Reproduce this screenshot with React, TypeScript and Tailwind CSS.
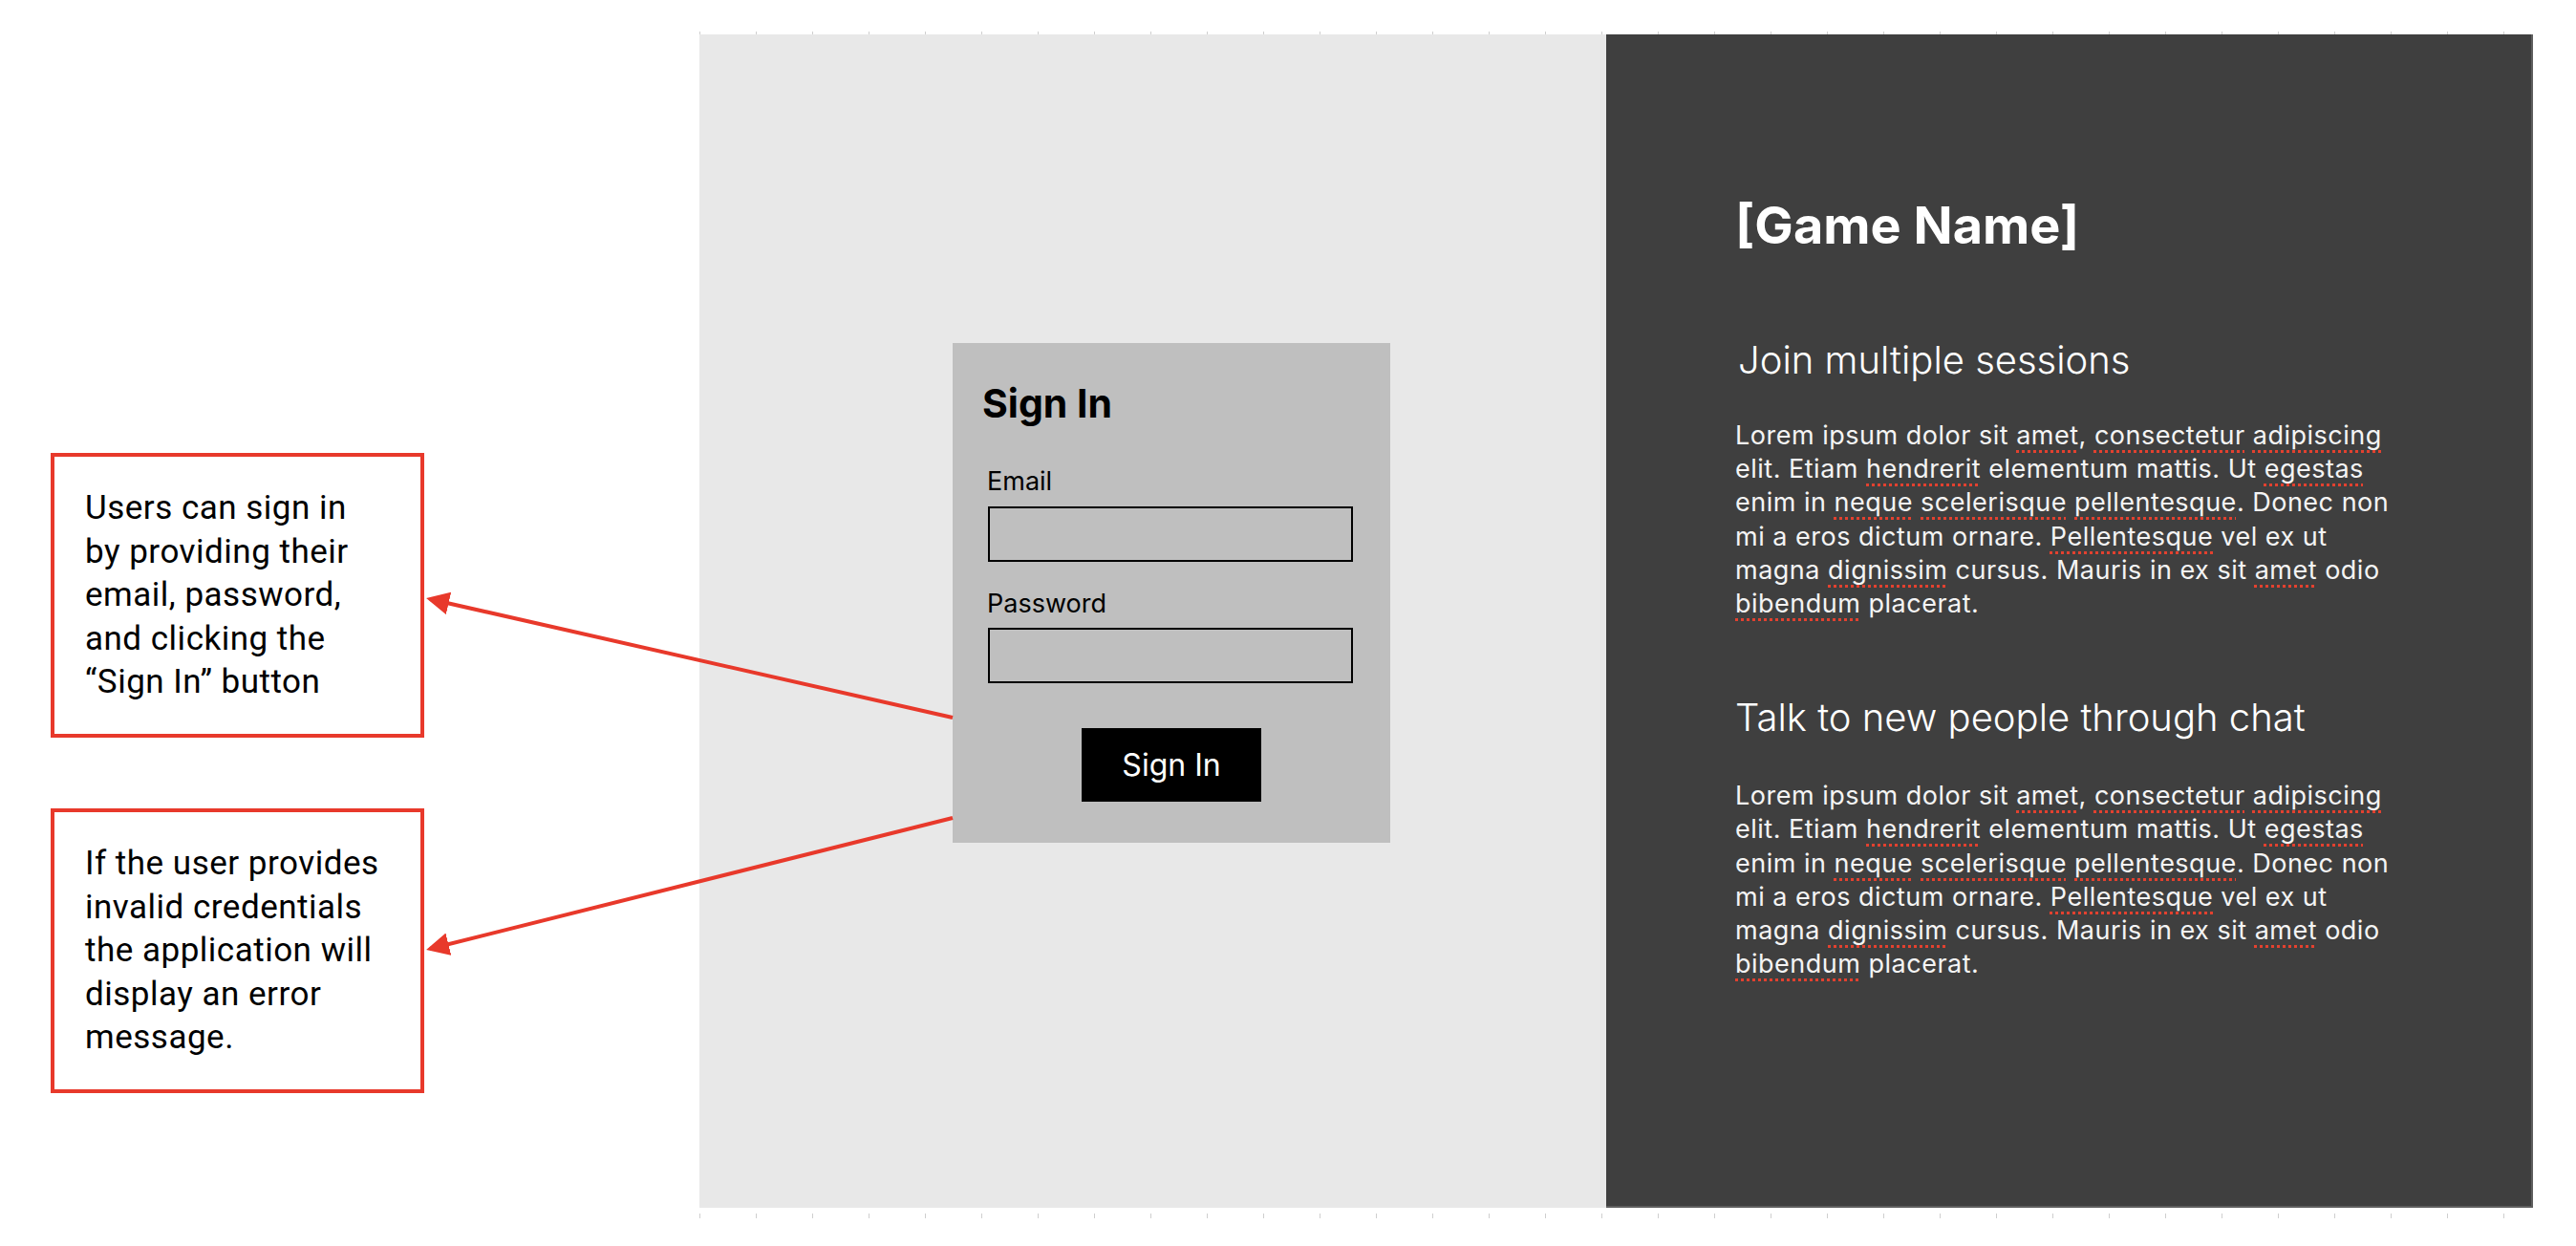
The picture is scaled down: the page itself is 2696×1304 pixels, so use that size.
import React from 'react'

const sq = 'underline decoration-dotted decoration-[#e3412f] decoration-[3px] underline-offset-[6px]'

function Lorem() {
  return (
    <p className="text-[27px] leading-[35.2px] tracking-[0.5px] text-[#f4f4f4] whitespace-nowrap">
      Lorem ipsum dolor sit <span className={sq}>amet</span>, <span className={sq}>consectetur</span> <span className={sq}>adipiscing</span>
      <br />
      elit. Etiam <span className={sq}>hendrerit</span> elementum mattis. Ut <span className={sq}>egestas</span>
      <br />
      enim in <span className={sq}>neque</span> <span className={sq}>scelerisque</span> <span className={sq}>pellentesque</span>. Donec non
      <br />
      mi a eros dictum ornare. <span className={sq}>Pellentesque</span> vel ex ut
      <br />
      magna <span className={sq}>dignissim</span> cursus. Mauris in ex sit <span className={sq}>amet</span> odio
      <br />
      <span className={sq}>bibendum</span> placerat.
    </p>
  )
}

function Note({ lines }: { lines: string[] }) {
  return (
    <div className="h-[298px] border-[4px] border-[#e8392b] bg-white pl-[32px] pt-[31px] font-['Roboto',sans-serif] text-[35px] leading-[45.6px] tracking-[0.5px] text-black">
      {lines.map((l, i) => (
        <div key={i} className="whitespace-nowrap">{l}</div>
      ))}
    </div>
  )
}

function Ticks({ className }: { className: string }) {
  return (
    <div className={'flex gap-[58px] ' + className}>
      {Array.from({ length: 33 }).map((_, i) => (
        <div key={i} className="w-px h-full bg-[#cfcfcf]" />
      ))}
    </div>
  )
}

export default function App() {
  return (
    <div className="relative w-[2696px] h-[1304px] bg-white overflow-hidden flex font-['Inter',sans-serif]">
      <div className="w-[391px] ml-[53px] mt-[474px] flex flex-col gap-[74px]">
        <Note lines={['Users can sign in', 'by providing their', 'email, password,', 'and clicking the', '\u201cSign In\u201d button']} />
        <Note lines={['If the user provides', 'invalid credentials', 'the application will', 'display an error', 'message.']} />
      </div>

      <div className="ml-[288px] mt-[33px] flex flex-col">
        <Ticks className="h-[3px]" />
        <div className="flex">
          <div className="w-[949px] h-[1228px] bg-[#e8e8e8] pl-[265px] pt-[323px]">
            <div className="w-[458px] h-[523px] bg-[#bfbfbf] flex flex-col text-black">
              <h2 className="ml-[31px] mt-[39px] text-[41px] leading-[49px] font-bold">Sign In</h2>
              <label className="ml-[36px] mt-[41px] text-[27px] leading-[32px]">Email</label>
              <input className="ml-[37px] mt-[10px] w-[382px] h-[58px] border-2 border-black bg-transparent outline-none" />
              <label className="ml-[36px] mt-[28px] text-[27px] leading-[32px]">Password</label>
              <input type="password" className="ml-[37px] mt-[9px] w-[382px] h-[58px] border-2 border-black bg-transparent outline-none" />
              <button className="self-center mt-[47px] w-[188px] h-[77px] bg-black text-white text-[32px]">Sign In</button>
            </div>
          </div>
          <div className="w-[970px] h-[1228px] bg-[#3f3f3f] border-b-2 border-r-2 border-[#5e5e5e] pl-[135px] pt-[168px] text-white">
            <h1 className="text-[54px] leading-[64px] font-bold">[Game Name]</h1>
            <h3 className="mt-[85px] ml-[3px] text-[40px] leading-[48px] font-light">Join multiple sessions</h3>
            <div className="mt-[37px]">
              <Lorem />
            </div>
            <h3 className="mt-[78px] text-[40px] leading-[48px] font-light">Talk to new people through chat</h3>
            <div className="mt-[40px]">
              <Lorem />
            </div>
          </div>
        </div>
        <Ticks className="h-[5px] mt-[6px]" />
      </div>

      <svg className="absolute inset-0 pointer-events-none" width="2696" height="1304">
        <defs>
          <marker id="ah" markerWidth="6" markerHeight="6" refX="5" refY="3" orient="auto" markerUnits="strokeWidth">
            <path d="M0,0 L6,3 L0,6 z" fill="#e8392b" />
          </marker>
        </defs>
        <line x1="997" y1="751" x2="450" y2="627" stroke="#e8392b" strokeWidth="4" markerEnd="url(#ah)" />
        <line x1="997" y1="856" x2="450" y2="993" stroke="#e8392b" strokeWidth="4" markerEnd="url(#ah)" />
      </svg>
    </div>
  )
}
